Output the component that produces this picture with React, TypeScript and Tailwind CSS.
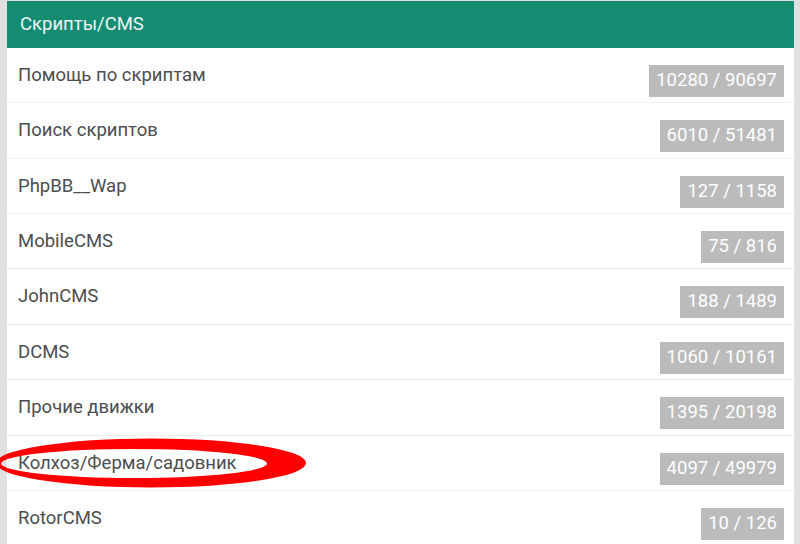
import * as React from "react";

interface ForumRow {
  title: string;
  topics: number;
  posts: number;
}

const rows: ForumRow[] = [
  { title: "Помощь по скриптам", topics: 10280, posts: 90697 },
  { title: "Поиск скриптов", topics: 6010, posts: 51481 },
  { title: "PhpBB__Wap", topics: 127, posts: 1158 },
  { title: "MobileCMS", topics: 75, posts: 816 },
  { title: "JohnCMS", topics: 188, posts: 1489 },
  { title: "DCMS", topics: 1060, posts: 10161 },
  { title: "Прочие движки", topics: 1395, posts: 20198 },
  { title: "Колхоз/Ферма/садовник", topics: 4097, posts: 49979 },
  { title: "RotorCMS", topics: 10, posts: 126 },
];

export default function App() {
  return (
    <div
      className="relative h-[544px] w-[800px] overflow-hidden bg-[#e0e0e0] pl-[7px] pr-[6px] pt-[1px]"
      style={{ fontFamily: "Roboto, 'Noto Sans', sans-serif" }}
    >
      <div className="bg-white">
        <div className="flex h-[47px] items-center bg-[#138c72] px-[13px] pt-[1px] text-[18.5px] text-[#f2f2f2]">
          Скрипты/CMS
        </div>
        {rows.map((row) => (
          <div
            key={row.title}
            className="flex h-[55.36px] items-start justify-between border-b border-[#eeeeee] pl-[11px] pr-[10px]"
          >
            <span className="pt-[16px] text-[18.5px] leading-[22px] text-[#4d4d4d]">
              {row.title}
            </span>
            <span className="mt-[17px] bg-[#bbbbbb] px-[7px] pb-[2px] text-[18.5px] leading-[30px] text-white">
              {row.topics} / {row.posts}
            </span>
          </div>
        ))}
      </div>

      {/* red marker annotation */}
      <svg
        className="pointer-events-none absolute left-0 top-[437px]"
        width="310"
        height="56"
        viewBox="0 0 310 56"
      >
        <path
          fillRule="evenodd"
          fill="#ff0000"
          d="M-4 26 A155 24.5 0 1 0 306 26 A155 24.5 0 1 0 -4 26 Z M1 26.5 A133 14.5 0 1 0 267 26.5 A133 14.5 0 1 0 1 26.5 Z"
        />
      </svg>
    </div>
  );
}
